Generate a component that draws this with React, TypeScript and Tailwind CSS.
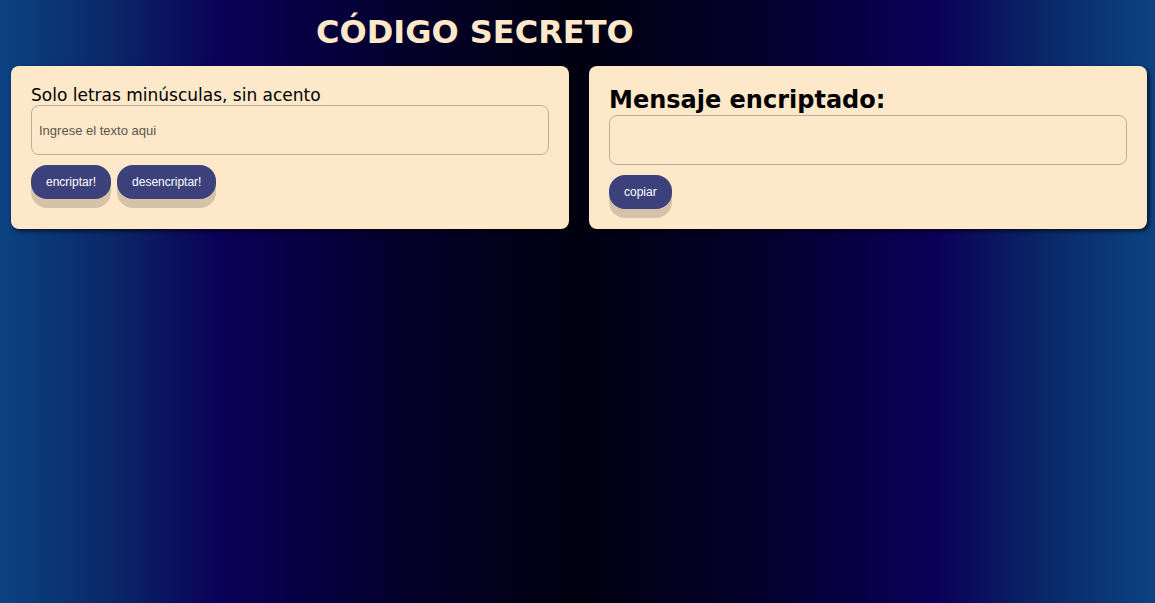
import { useState } from "react";

const encrypt = (s: string) =>
  s.replace(/e/g, "enter").replace(/i/g, "imes").replace(/a/g, "ai").replace(/o/g, "ober").replace(/u/g, "ufat");

const decrypt = (s: string) =>
  s.replace(/enter/g, "e").replace(/imes/g, "i").replace(/ai/g, "a").replace(/ober/g, "o").replace(/ufat/g, "u");

const btn =
  "h-[34px] rounded-[16px] bg-[#3c417c] px-[15px] text-[12px] text-white shadow-[0_9px_0_#d6c2a6] font-['Liberation_Sans',Arial,sans-serif]";

export default function App() {
  const [text, setText] = useState("");
  const [result, setResult] = useState("");

  return (
    <div className="min-h-screen w-full bg-[linear-gradient(to_right,#0b4382_0%,#0a2666_10%,#0a0058_19%,#04002a_35%,#010010_50%,#04002a_65%,#0a0058_81%,#0a2666_90%,#0b4382_100%)] font-['DejaVu_Sans',Verdana,sans-serif]">
      <h1 className="pl-[316px] pt-[13px] pb-[14px] text-[32px] font-bold leading-[39px] text-[#fde8c9]">
        CÓDIGO SECRETO
      </h1>

      <div className="grid grid-cols-2 gap-5 px-[11px] pr-[8px]">
        <section className="rounded-lg bg-[#fde8c9] px-5 pt-[19px] pb-5 shadow-[2px_2px_4px_rgba(0,0,0,0.7)]">
          <p className="text-[17px] leading-[20px] text-black">Solo letras minúsculas, sin acento</p>
          <input
            value={text}
            onChange={e => setText(e.target.value)}
            placeholder="Ingrese el texto aqui"
            className="h-[50px] w-full rounded-lg border border-[#bcae97] bg-transparent px-[7px] text-[13px] text-[#333] placeholder:text-[#5a554e] outline-none font-['Liberation_Sans',Arial,sans-serif]"
          />
          <div className="mt-[10px] flex gap-[6px]">
            <button className={btn} onClick={() => setResult(encrypt(text))}>encriptar!</button>
            <button className={btn} onClick={() => setResult(decrypt(text))}>desencriptar!</button>
          </div>
        </section>

        <section className="rounded-lg bg-[#fde8c9] px-5 pt-[20px] pb-5 shadow-[2px_2px_4px_rgba(0,0,0,0.7)]">
          <h2 className="text-[24px] font-bold leading-[29px] text-black">Mensaje encriptado:</h2>
          <div className="h-[50px] w-full rounded-lg border border-[#bcae97] px-[7px] py-2 text-[13px] font-['Liberation_Sans',Arial,sans-serif]">
            {result}
          </div>
          <div className="mt-[10px] flex">
            <button className={btn} onClick={() => navigator.clipboard?.writeText(result)}>copiar</button>
          </div>
        </section>
      </div>
    </div>
  );
}
